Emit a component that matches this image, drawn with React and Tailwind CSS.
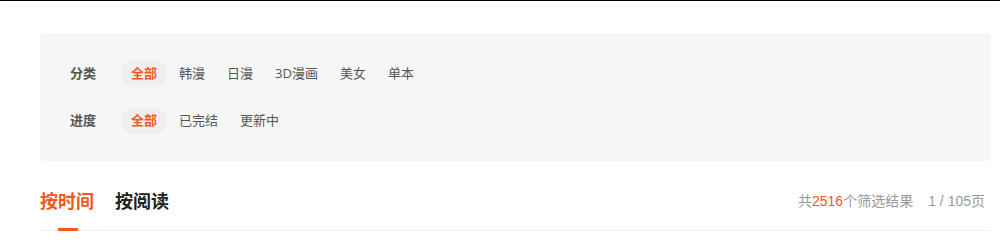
import React from 'react';

const categories = ['全部', '韩漫', '日漫', '3D漫画', '美女', '单本'];
const progress = ['全部', '已完结', '更新中'];

const FilterRow = ({ label, items }) => (
  <div className="flex items-center h-[27px]">
    <span className="w-[51px] shrink-0 text-[13px] font-bold text-[#555]">{label}</span>
    <div className="flex items-center gap-[2px]">
      {items.map((item, i) => (
        <span
          key={item}
          className={
            i === 0
              ? 'h-[27px] leading-[27px] px-[10px] rounded-full bg-[#efefef] text-[13px] font-bold text-[#f2591b]'
              : 'h-[27px] leading-[27px] px-[10px] rounded-full text-[13px] text-[#555]'
          }
        >
          {item}
        </span>
      ))}
    </div>
  </div>
);

const App = () => {
  return (
    <div className="w-[1000px] h-[252px] bg-white overflow-hidden" style={{ fontFamily: '"Open Sans", "Noto Sans CJK SC", sans-serif' }}>
      <div className="h-px bg-black shadow-[0_2px_10px_rgba(0,0,0,0.05)]"></div>
      <div className="ml-[40px] w-[951px] mt-[32px]">
        <div className="bg-[#f6f6f6] rounded-[4px] pl-[30px] py-[27px] flex flex-col gap-[20px]">
          <FilterRow label="分类" items={categories} />
          <FilterRow label="进度" items={progress} />
        </div>
        <div className="mt-[22px] flex items-center justify-between h-[36px] pr-[6px]">
          <div className="flex items-center gap-[21px]">
            <span className="text-[18px] font-bold text-[#f2591b]">按时间</span>
            <span className="text-[18px] font-bold text-[#222]">按阅读</span>
          </div>
          <div className="text-[14px] text-[#999] font-['Liberation_Sans','Noto_Sans_CJK_SC',sans-serif]">
            共<span className="text-[#f2591b]">2516</span>个筛选结果
            <span className="ml-[15px]">1 / 105页</span>
          </div>
        </div>
        <div className="relative mt-[11px] h-px bg-[#f0f0f0]">
          <div className="absolute left-[18px] top-[-2px] w-[20px] h-[3px] bg-[#f2591b]"></div>
        </div>
      </div>
    </div>
  );
};

export default App;
